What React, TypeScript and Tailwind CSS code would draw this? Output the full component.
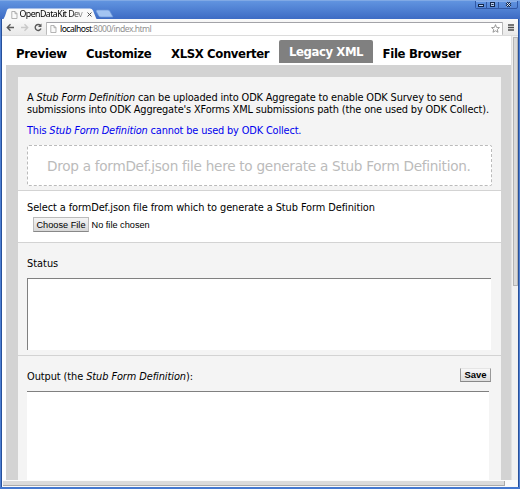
import type { ReactNode } from "react";

function Tab({ children, className }: { children: ReactNode; className: string }) {
  return <span className={`block shrink-0 whitespace-nowrap ${className}`}>{children}</span>;
}

function WindowControls() {
  return (
    <svg width="45" height="10" viewBox="0 0 45 10" className="mr-px ml-auto shrink-0" fill="none">
      <path d="M1.5 0V6.500Q1.500 7.500 2.500 7.500H42Q43.5 7.500 43.5 6V0M12.5 0V7M24.5 0V7" stroke="#3158a5" />
      <path d="M2 .5H43" stroke="#88aeea" />
      <rect x="4.5" y="3.5" width="5" height="2" fill="#b9d0f3" stroke="#142748" />
      <rect x="16.5" y="1.5" width="4" height="4" fill="#b9d0f3" stroke="#142748" />
      <path d="M17.500 3.5H19.500" stroke="#142748" />
      <path d="M32.5 1.500L36.5 5.500M36.5 1.500L32.5 5.500" stroke="#142748" strokeWidth="2.4" />
      <path d="M32.5 1.500L36.5 5.500M36.5 1.500L32.5 5.500" stroke="#dce8fc" />
    </svg>
  );
}

function PageIcon({ className }: { className: string }) {
  return (
    <svg width="7" height="8" viewBox="0 0 7 8" className={className} fill="#fafafa" stroke="#a2a2a2" strokeWidth=".8">
      <path d="M.8 .5H4L6 2.6V7.5H.8ZM4 .5V2.7H6" />
    </svg>
  );
}

function TitleBar() {
  return (
    <div className="relative flex h-[19px] shrink-0 border-t border-[#80a9e5] bg-linear-to-b from-[#6194e0] to-[#3d6bc4]">
      <svg width="116" height="12" viewBox="0 0 116 12" className="absolute top-[7px] left-0">
        <path d="M97 2H108Q109.5 2 110 3.5L113 9H101Q99 9 98.5 7.5L96 3Z" fill="#a3c4f2" stroke="#6c96da" strokeWidth=".7" />
        <path d="M2 12Q4 11 5 8L7 2Q7.5 .5 9 .5H90Q92 .5 93 2.5L96 10Q96.5 11.5 98 12Z" fill="#f9f9f9" />
      </svg>
      <div className="relative mt-[8px] ml-[11px] flex h-[11px] w-[82px] items-center">
        <PageIcon className="shrink-0" />
        <span className="ml-[1.5px] w-[66px] shrink-0 bg-linear-to-r from-black from-70% to-[#c5c5c5] bg-clip-text font-['Noto_Sans',sans-serif] text-[8.8px] leading-[11px] tracking-[-0.55px] whitespace-nowrap text-transparent">OpenDataKit Dev</span>
        <svg width="5" height="5" viewBox="0 0 5 5" className="ml-[1.5px] shrink-0" stroke="#505050"><path d="M.5 .5L4.5 4.5M4.5 .5L.5 4.5" /></svg>
      </div>
      <WindowControls />
    </div>
  );
}

function Toolbar() {
  return (
    <div className="mx-[2px] flex h-[17px] shrink-0 items-center border-b border-[#dcdcdc] bg-linear-to-b from-[#f9f9f9] to-[#e9e9e9]">
      <svg width="44" height="17" viewBox="0 0 44 17" className="shrink-0" fill="none" strokeWidth="1.4">
        <path d="M12 8.5H5.5M8.5 5.3L5.3 8.5L8.5 11.7" stroke="#5a5a5a" />
        <path d="M19 8.5H25.5M22.5 5.3L25.7 8.5L22.5 11.7" stroke="#c9c9c9" />
        <path d="M38.5 6.5A3 3 0 1 0 39 9.5" stroke="#5a5a5a" />
        <path d="M39.5 4.5V8H36Z" fill="#5a5a5a" />
      </svg>
      <div className="mt-[2px] flex h-[13px] w-[457px] items-center rounded-[1px] border-x border-t border-x-[#bbb] border-t-[#a3a3a8] bg-white">
        <PageIcon className="ml-[3px] shrink-0" />
        <span className="ml-[3px] font-['Noto_Sans',sans-serif] text-[8.6px] leading-3 tracking-[-0.53px] whitespace-nowrap text-[#929292]"><span className="text-black">localhost</span>:8000/index.html</span>
        <svg width="9" height="9" viewBox="0 0 10 10" className="mr-[2px] ml-auto" fill="none" stroke="#858585" strokeWidth=".9">
          <path d="M5 .7L6.2 3.8L9.4 4L7 6.1L7.8 9.2L5 7.5L2.2 9.2L3 6.1L.6 4L3.8 3.8Z" />
        </svg>
      </div>
      <svg width="6" height="7" viewBox="0 0 6 7" className="mt-px ml-[5px]" stroke="#4c4c4c" strokeWidth="1.3"><path d="M0 1H6M0 3.5H6M0 6H6" /></svg>
    </div>
  );
}

export default function App() {
  return (
    <main className="flex h-[489px] w-[520px] flex-col overflow-hidden bg-[#4478cf] font-['DejaVu_Sans',sans-serif] text-black">
      <TitleBar />
      <div className="flex h-[468px] flex-col border-x border-[#4e7fd2] bg-[#27509a]">
        <div className="-mx-px"><Toolbar /></div>
        <div className="mx-px flex h-[444px] overflow-hidden bg-white">
          <div className="flex w-[509px] shrink-0 flex-col overflow-hidden">
            <nav className="flex h-[29px] shrink-0 text-[11.7px] leading-[14px] font-bold">
              <Tab className="mt-[11px] ml-[14px] w-[70px] tracking-[-0.24px]">Preview</Tab>
              <Tab className="mt-[11px] w-[85px] tracking-[-0.34px]">Customize</Tab>
              <Tab className="mt-[11px] w-[108px] tracking-[-0.38px]">XLSX Converter</Tab>
              <Tab className="mt-[4px] h-[23px] w-[94px] rounded-t-[2px] bg-[#808080] pt-[5px] pl-[10px] tracking-[-0.42px] text-white">Legacy XML</Tab>
              <Tab className="mt-[11px] ml-[9.5px] tracking-[-0.3px]">File Browser</Tab>
            </nav>
            <div className="ml-1 h-[415px] bg-[#d3d3d3] pt-3 pr-[10px] pl-3 text-[9.8px] leading-3">
              <section className="h-[114px] border-b border-[#d3d3d3] bg-[#f4f4f4] px-[9px] pt-[15px]">
                <p className="tracking-[-0.145px] whitespace-nowrap">A <em>Stub Form Definition</em> can be uploaded into ODK Aggregate to enable ODK Survey to send<br />submissions into ODK Aggregate's XForms XML submissions path (the one used by ODK Collect).</p>
                <p className="mt-[9px] tracking-[-0.155px] whitespace-nowrap text-[#0000ee]">This <em>Stub Form Definition</em> cannot be used by ODK Collect.</p>
                <div className="mt-[8px] flex h-[41px] w-[465px] items-center rounded-[2px] border border-dashed border-[#bbb] bg-white pt-px pl-[19px] text-[13.6px] tracking-[-0.27px] whitespace-nowrap text-[#bbb]">Drop a formDef.json file here to generate a Stub Form Definition.</div>
              </section>
              <section className="h-[52px] border-b border-[#d3d3d3] bg-white px-[9px] pt-[11px]">
                <p className="tracking-[-0.083px] whitespace-nowrap">Select a formDef.json file from which to generate a Stub Form Definition</p>
                <div className="mt-[3px] ml-[6px] flex items-center font-['Liberation_Sans',sans-serif] text-[9.2px]">
                  <button className="h-[15px] w-[56px] border border-x-[#bbb] border-t-[#bbb] border-b-[#888] bg-linear-to-b from-[#f5f5f5] to-[#d8d8d8] whitespace-nowrap">Choose File</button>
                  <span className="ml-[2.5px]">No file chosen</span>
                </div>
              </section>
              <section className="h-[113px] border-b border-[#d3d3d3] bg-[#f4f4f4] px-[9px] pt-[15px]">
                <label className="block">Status</label>
                <div className="mt-2 h-[72px] w-[464px] border-t border-l border-[#808080] bg-white" />
              </section>
              <section className="h-[124px] bg-[#f4f4f4] px-[9px] pt-[11px]">
                <div className="flex h-[24px] w-[464px] justify-between">
                  <label className="pt-[4px] tracking-[-0.08px]">Output (the <em>Stub Form Definition</em>):</label>
                  <button className="mt-px h-[14px] w-[31px] border border-x-[#999] border-t-[#e5e5e5] border-b-[#888] bg-linear-to-b from-[#f8f8f8] to-[#dedede] font-['Liberation_Sans',sans-serif] text-[9.5px] leading-3 font-bold">Save</button>
                </div>
                <div className="h-[89px] w-[462px] border-t border-[#808080] bg-white" />
              </section>
            </div>
          </div>
          <div className="flex w-[7px] flex-col border-l border-[#e2e2e2] bg-[#f1f1f1]">
            <div className="mt-px ml-px h-[249px] w-[5px] border border-[#b5b5b5] bg-[#dadada]" />
          </div>
        </div>
        <div className="mx-px h-[7px] bg-[#fafafa] pt-px">
          <div className="ml-px h-[5px] w-[502px] border-r border-b border-[#aaa] bg-[#dadada]" />
        </div>
      </div>
    </main>
  );
}
